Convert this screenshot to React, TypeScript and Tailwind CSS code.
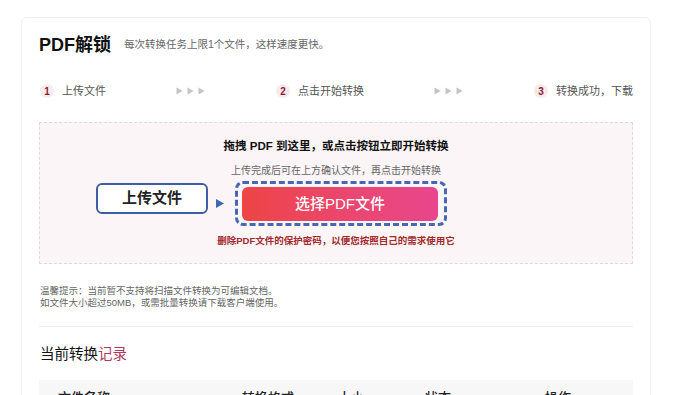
import React from "react";

const font = { fontFamily: '"Liberation Sans", "Noto Sans CJK SC", sans-serif' };

function Step({ n, label }: { n: string; label: string }) {
  return (
    <div className="flex items-center">
      <div className="w-[14px] h-[14px] rounded-full bg-[#f7ebec] flex items-center justify-center text-[10px] font-bold text-[#8e1b2e]">
        {n}
      </div>
      <span className="ml-[8px] text-[11px] text-[#555]">{label}</span>
    </div>
  );
}

function Arrows() {
  return (
    <div className="flex items-center gap-[4px] w-[30px]">
      {[0, 1, 2].map((i) => (
        <svg key={i} width="7" height="8" viewBox="0 0 7 8">
          <path d="M0.5 0.5 L6.5 4 L0.5 7.5 Z" fill="#c4c4c4" />
        </svg>
      ))}
    </div>
  );
}

export default function App() {
  return (
    <div className="w-[700px] h-[395px] bg-white overflow-hidden" style={font}>
      <div className="mt-[17px] ml-[21px] w-[630px] h-[400px] border border-[#efefef] rounded-[6px] px-[17px] pt-[17px]">
        {/* Title */}
        <div className="h-[20px] flex items-center">
          <span className="text-[18px] font-bold text-[#111] leading-[20px]">PDF解锁</span>
          <span className="ml-[13px] text-[10.5px] text-[#666]">每次转换任务上限1个文件，这样速度更快。</span>
        </div>

        {/* Steps */}
        <div className="mt-[26px] h-[20px] flex items-center justify-between pl-[1px]">
          <Step n="1" label="上传文件" />
          <Arrows />
          <Step n="2" label="点击开始转换" />
          <Arrows />
          <Step n="3" label="转换成功，下载" />
        </div>

        {/* Dropzone */}
        <div className="mt-[21px] h-[142px] border border-dashed border-[#dcdcdc] bg-[#fbf5f7] pt-[15px]">
          <div className="text-center text-[11.5px] font-bold text-[#111] leading-[16px]">
            拖拽 PDF 到这里，或点击按钮立即开始转换
          </div>
          <div className="mt-[10px] text-center text-[10px] text-[#666] leading-[14px]">
            上传完成后可在上方确认文件，再点击开始转换
          </div>
          <div className="mt-[3px] flex items-start pl-[56px]">
            <div className="mt-[2px] w-[112px] h-[31px] border-2 border-[#3d5f9f] rounded-[6px] bg-white flex items-center justify-center text-[15px] font-bold text-[#222]">
              上传文件
            </div>
            <svg className="mt-[18px] ml-[8px]" width="8" height="9" viewBox="0 0 8 9">
              <path d="M0 0 L8 4.5 L0 9 Z" fill="#3f66b3" />
            </svg>
            <div className="ml-[11px] w-[212px] h-[45px] border-[3px] border-dashed border-[#4767b2] rounded-[8px] pt-[3px] pl-[4px]">
              <div className="w-[196px] h-[34px] rounded-[6px] bg-gradient-to-r from-[#ee4444] to-[#e8468d] flex items-center justify-center text-[15px] text-white font-medium">
                选择PDF文件
              </div>
            </div>
          </div>
          <div className="mt-[9px] text-center text-[9.5px] font-bold text-[#a3282c] leading-[12px]">
            删除PDF文件的保护密码，以便您按照自己的需求使用它
          </div>
        </div>

        {/* Tips */}
        <div className="mt-[21px] text-[9.5px] leading-[12px] text-[#666] pl-[1px]">
          <div>温馨提示：当前暂不支持将扫描文件转换为可编辑文档。</div>
          <div>如文件大小超过50MB，或需批量转换请下载客户端使用。</div>
        </div>

        <div className="mt-[17px] h-px bg-[#eeeeee]" />

        <div className="mt-[18px] h-[20px] flex items-center text-[14.5px] text-[#111] pl-[1px]">
          当前转换<span className="text-[#b0385f]">记录</span>
        </div>

        <div className="mt-[15px] h-[36px] bg-[#f7f7f7] pl-[19px] grid grid-cols-[184px_96px_87px_120px_1fr] items-center text-[13px] text-[#222] font-medium">
          <span>文件名称</span>
          <span>转换格式</span>
          <span>大小</span>
          <span>状态</span>
          <span>操作</span>
        </div>
      </div>
    </div>
  );
}
